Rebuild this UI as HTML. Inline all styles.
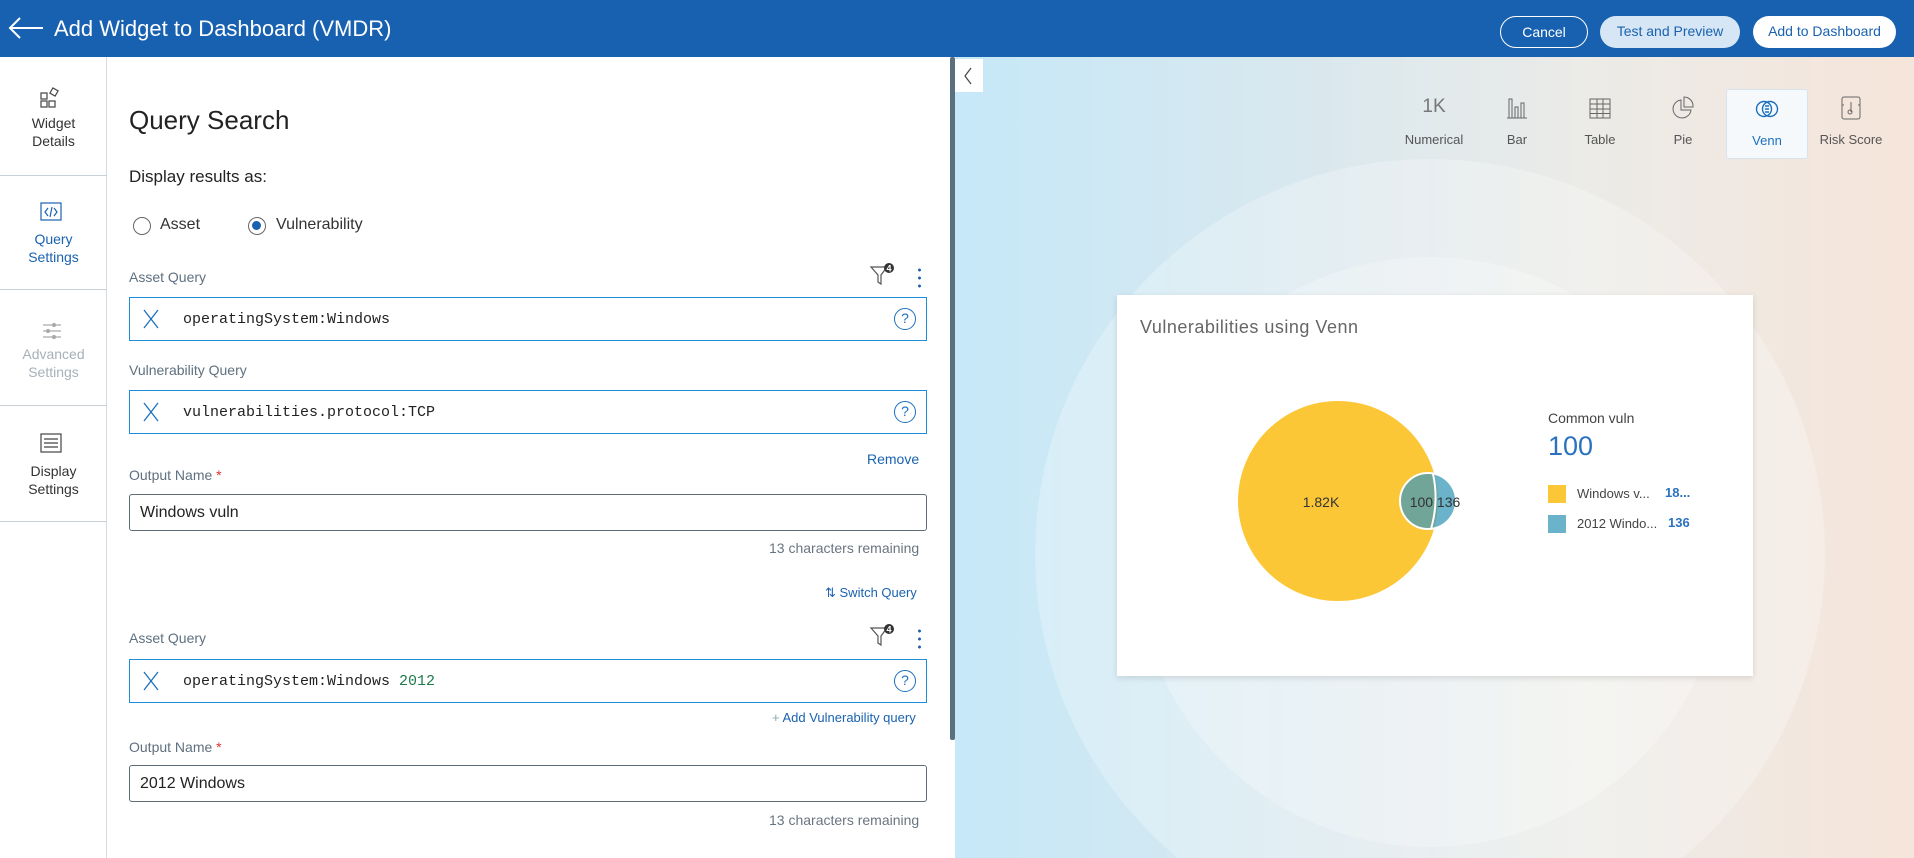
<!DOCTYPE html>
<html style="overflow:hidden;width:1914px;height:858px"><head><meta charset="utf-8"><style>
*{box-sizing:border-box;margin:0;padding:0}
body{width:1914px;height:858px;overflow:hidden;font-family:"Liberation Sans",sans-serif;background:#fff;position:relative}
.a{position:absolute}
.hdr{left:0;top:0;width:1914px;height:57px;background:#1761b0}
.btn{position:absolute;top:16px;height:32px;border-radius:16px;font-size:14px;line-height:30px;text-align:center}
.nav{left:0;top:57px;width:107px;height:801px;border-right:1px solid #d6dbe0}
.ni{position:absolute;left:0;width:107px;text-align:center;font-size:14px;line-height:18px;color:#333}
.sep{position:absolute;left:0;width:107px;height:1px;background:#c9d0d6}
.lbl{position:absolute;left:129px;font-size:14px;color:#5f7080}
.qin{position:absolute;left:129px;width:798px;border:1px solid #1a8fd8;height:44px}
.qin .x{position:absolute;left:12px;top:11px}
.qin .t{position:absolute;left:53px;top:13px;font-family:"Liberation Mono",monospace;font-size:15px;color:#222}
.qin .q{position:absolute;right:10px;top:10px;width:22px;height:22px;border:1.5px solid #1a6fc0;border-radius:50%;color:#1a6fc0;font-size:14px;text-align:center;line-height:19px}
.oin{position:absolute;left:129px;width:798px;height:37px;border:1px solid #5f6b75;border-radius:3px;font-size:16px;padding:9px 10px;color:#222}
.link{position:absolute;font-size:13px;color:#1a62b0}
.ct{position:absolute;top:92px;width:82px;text-align:center;font-size:13px;color:#555}
</style></head><body>
<div class="a hdr"></div>
<svg class="a" style="left:8px;top:16px" width="36" height="24" viewBox="0 0 36 24"><path d="M35 12H2M12 2L2 12l10 10" stroke="#fff" stroke-width="2" fill="none"/></svg>
<div class="a" style="left:54px;top:16px;color:#fff;font-size:22px">Add Widget to Dashboard (VMDR)</div>
<div class="btn" style="left:1500px;width:88px;border:1.5px solid #fff;color:#fff">Cancel</div>
<div class="btn" style="left:1600px;width:140px;background:#d6e6f5;color:#1a62b0">Test and Preview</div>
<div class="btn" style="left:1753px;width:143px;background:#fff;color:#1a62b0">Add to Dashboard</div>

<div class="a nav">
<svg class="a" style="left:40px;top:30px" width="22" height="22" viewBox="0 0 22 22" fill="none" stroke="#444" stroke-width="1.2"><rect x="1" y="6" width="6" height="6"/><rect x="1" y="14" width="6" height="6"/><rect x="9" y="14" width="6" height="6"/><rect x="11" y="2" width="6" height="6" transform="rotate(30 14 5)"/></svg>
<div class="ni" style="top:57px">Widget<br>Details</div>
<div class="sep" style="top:118px"></div>
<svg class="a" style="left:40px;top:145px" width="22" height="20" viewBox="0 0 22 20" fill="none" stroke="#1a62b0" stroke-width="1.2"><rect x="1" y="1" width="20" height="17"/><path d="M8 6l-3 4 3 4M14 6l3 4-3 4M12 5l-2 10"/></svg>
<div class="ni" style="top:173px;color:#1a62b0">Query<br>Settings</div>
<div class="sep" style="top:232px"></div>
<svg class="a" style="left:42px;top:264px" width="20" height="20" viewBox="0 0 20 20" stroke="#aaa" stroke-width="1.2"><path d="M1 4h18M1 10h18M1 16h18"/><circle cx="12" cy="4" r="1.5" fill="#aaa"/><circle cx="6" cy="10" r="1.5" fill="#aaa"/><circle cx="12" cy="16" r="1.5" fill="#aaa"/></svg>
<div class="ni" style="top:288px;color:#a8b0b8">Advanced<br>Settings</div>
<div class="sep" style="top:348px"></div>
<svg class="a" style="left:40px;top:376px" width="22" height="20" viewBox="0 0 22 20" fill="none" stroke="#444" stroke-width="1.2"><rect x="1" y="1" width="20" height="18"/><path d="M4 6h14M4 10h14M4 14h14"/></svg>
<div class="ni" style="top:405px">Display<br>Settings</div>
<div class="sep" style="top:464px"></div>
</div>

<div class="a" style="left:129px;top:105px;font-size:26px;color:#222">Query Search</div>
<div class="a" style="left:129px;top:167px;font-size:17px;color:#222">Display results as:</div>
<div class="a" style="left:133px;top:217px;width:18px;height:18px;border:1.5px solid #666;border-radius:50%"></div>
<div class="a" style="left:160px;top:216px;font-size:16px;color:#333">Asset</div>
<div class="a" style="left:248px;top:217px;width:18px;height:18px;border:1.5px solid #666;border-radius:50%"><div style="margin:3px;width:9px;height:9px;border-radius:50%;background:#1a62b0"></div></div>
<div class="a" style="left:276px;top:216px;font-size:16px;color:#333">Vulnerability</div>

<div class="lbl" style="top:269px">Asset Query</div>
<svg class="a" style="left:869px;top:262px" width="28" height="26" viewBox="0 0 28 26"><path d="M2 5h16l-6 8v9l-3-2v-7z" fill="none" stroke="#555" stroke-width="1.2"/><circle cx="20" cy="6" r="5" fill="#333"/><text x="20" y="9.5" font-size="9" fill="#fff" text-anchor="middle" font-family="Liberation Sans" font-weight="bold">4</text></svg>
<div class="a" style="left:918px;top:266px;width:3px;height:22px;background:radial-gradient(circle,#1a62b0 1.3px,transparent 1.6px) 0 0/3px 8px"></div>
<div class="qin" style="top:297px"><svg class="x" width="18" height="20"><path d="M2 1l14 18M16 1L2 19" stroke="#1a6fc0" stroke-width="1.3"/></svg><div class="t">operatingSystem:Windows</div><div class="q">?</div></div>

<div class="lbl" style="top:362px">Vulnerability Query</div>
<div class="qin" style="top:390px"><svg class="x" width="18" height="20"><path d="M2 1l14 18M16 1L2 19" stroke="#1a6fc0" stroke-width="1.3"/></svg><div class="t">vulnerabilities.protocol:TCP</div><div class="q">?</div></div>
<div class="link" style="left:867px;top:451px;font-size:14px">Remove</div>
<div class="lbl" style="top:467px">Output Name <span style="color:#d33">*</span></div>
<div class="oin" style="top:494px">Windows vuln</div>
<div class="a" style="left:769px;top:540px;font-size:14px;color:#6a7580">13 characters remaining</div>
<div class="link" style="left:825px;top:585px">⇅ Switch Query</div>

<div class="lbl" style="top:630px">Asset Query</div>
<svg class="a" style="left:869px;top:623px" width="28" height="26" viewBox="0 0 28 26"><path d="M2 5h16l-6 8v9l-3-2v-7z" fill="none" stroke="#555" stroke-width="1.2"/><circle cx="20" cy="6" r="5" fill="#333"/><text x="20" y="9.5" font-size="9" fill="#fff" text-anchor="middle" font-family="Liberation Sans" font-weight="bold">4</text></svg>
<div class="a" style="left:918px;top:627px;width:3px;height:22px;background:radial-gradient(circle,#1a62b0 1.3px,transparent 1.6px) 0 0/3px 8px"></div>
<div class="qin" style="top:659px"><svg class="x" width="18" height="20"><path d="M2 1l14 18M16 1L2 19" stroke="#1a6fc0" stroke-width="1.3"/></svg><div class="t">operatingSystem:Windows <span style="color:#1f7a4a">2012</span></div><div class="q">?</div></div>
<div class="link" style="left:772px;top:710px"><span style="color:#8aa">+</span> Add Vulnerability query</div>
<div class="lbl" style="top:739px">Output Name <span style="color:#d33">*</span></div>
<div class="oin" style="top:765px">2012 Windows</div>
<div class="a" style="left:769px;top:812px;font-size:14px;color:#6a7580">13 characters remaining</div>

<div class="a" style="left:950px;top:57px;width:5px;height:683px;background:#5a7080;border-radius:2px"></div>

<div class="a" style="left:955px;top:57px;width:959px;height:801px;background:linear-gradient(90deg,#c6e8f8 0%,#d8e8ef 35%,#ebebe8 65%,#f6e5da 100%);overflow:hidden">
  <div class="a" style="top:102px;width:790px;height:790px;border-radius:50%;left:80px;background:rgba(255,255,255,0.25)"></div>
  <div class="a" style="left:180px;top:200px;width:590px;height:590px;border-radius:50%;background:rgba(255,255,255,0.25)"></div>
  <div class="a" style="left:0;top:2px;width:28px;height:33px;background:#fff"><svg width="28" height="33"><path d="M16 9l-6 8 6 8" stroke="#444" fill="none" stroke-width="1.2"/></svg></div>
</div>

<div class="a" style="left:1726px;top:89px;width:82px;height:70px;background:#f6f9fc;border:1px solid #d5e3ef;border-radius:3px"></div>
<div class="a" style="left:1420px;top:96px;font-size:19px;color:#777;width:28px;text-align:center">1K</div>
<svg class="a" style="left:1506px;top:97px" width="22" height="22" viewBox="0 0 22 22" fill="none" stroke="#666"><path d="M1 21h20M3 21V2h3v19M9 21V10h3v11M15 21V6h3v15"/></svg>
<svg class="a" style="left:1589px;top:97px" width="22" height="22" viewBox="0 0 22 22" fill="none" stroke="#666"><rect x="1" y="2" width="20" height="19"/><path d="M1 7h20M1 12h20M1 16.5h20M8 2v19M14 2v19"/></svg>
<svg class="a" style="left:1671px;top:96px" width="24" height="24" viewBox="0 0 24 24" fill="none" stroke="#666"><path d="M10 4a9 9 0 1 0 10 10H10z"/><path d="M13 1a9 9 0 0 1 9 10h-9z"/></svg>
<svg class="a" style="left:1755px;top:97px" width="24" height="24" viewBox="0 0 24 24" fill="none" stroke="#1a6fc0" stroke-width="1.4"><circle cx="9" cy="12" r="7.5"/><circle cx="15" cy="12" r="7.5"/><path d="M10 9h4M10 12h4M10 15h4"/></svg>
<svg class="a" style="left:1840px;top:96px" width="22" height="24" viewBox="0 0 22 24" fill="none" stroke="#666"><rect x="2" y="1" width="18" height="22" rx="2"/><path d="M11 6v10M2 9h2M18 9h2"/><circle cx="10" cy="16" r="2"/></svg>
<div class="ct" style="left:1393px;top:132px">Numerical</div>
<div class="ct" style="left:1476px;top:132px">Bar</div>
<div class="ct" style="left:1559px;top:132px">Table</div>
<div class="ct" style="left:1642px;top:132px">Pie</div>
<div class="ct" style="left:1726px;top:133px;color:#1a6fc0">Venn</div>
<div class="ct" style="left:1810px;top:132px">Risk Score</div>

<div class="a" style="left:1117px;top:295px;width:636px;height:381px;background:#fff;box-shadow:0 2px 6px rgba(0,0,0,0.12)"></div>
<div class="a" style="left:1140px;top:317px;font-size:18px;color:#666;letter-spacing:0.5px">Vulnerabilities using Venn</div>
<svg class="a" style="left:1117px;top:295px" width="636" height="381">
<circle cx="221" cy="206" r="100" fill="#fcc737"/>
<circle cx="311" cy="206" r="28" fill="#6ab3cb"/>
<clipPath id="c"><circle cx="221" cy="206" r="100"/></clipPath>
<circle cx="311" cy="206" r="28" fill="#70a598" clip-path="url(#c)"/>
<circle cx="311" cy="206" r="28" fill="none" stroke="#fff" stroke-width="2"/>
<path d="M316 179Q322 206 314 234" stroke="#fff" stroke-width="2" fill="none"/>
<text x="204" y="212" font-size="14" fill="#333" text-anchor="middle" font-family="Liberation Sans">1.82K</text>
<text x="318" y="212" font-size="14" fill="#333" text-anchor="middle" font-family="Liberation Sans">100 136</text>
</svg>
<div class="a" style="left:1548px;top:410px;font-size:14px;color:#444">Common vuln</div>
<div class="a" style="left:1548px;top:431px;font-size:27px;color:#2a72c0">100</div>
<div class="a" style="left:1548px;top:485px;width:18px;height:18px;background:#fcc737"></div>
<div class="a" style="left:1577px;top:486px;font-size:13px;color:#444">Windows v...</div>
<div class="a" style="left:1665px;top:485px;font-size:13px;color:#2a72c0;font-weight:bold">18...</div>
<div class="a" style="left:1548px;top:515px;width:18px;height:18px;background:#6ab3cb"></div>
<div class="a" style="left:1577px;top:516px;font-size:13px;color:#444">2012 Windo...</div>
<div class="a" style="left:1668px;top:515px;font-size:13px;color:#2a72c0;font-weight:bold">136</div>
</body></html>
